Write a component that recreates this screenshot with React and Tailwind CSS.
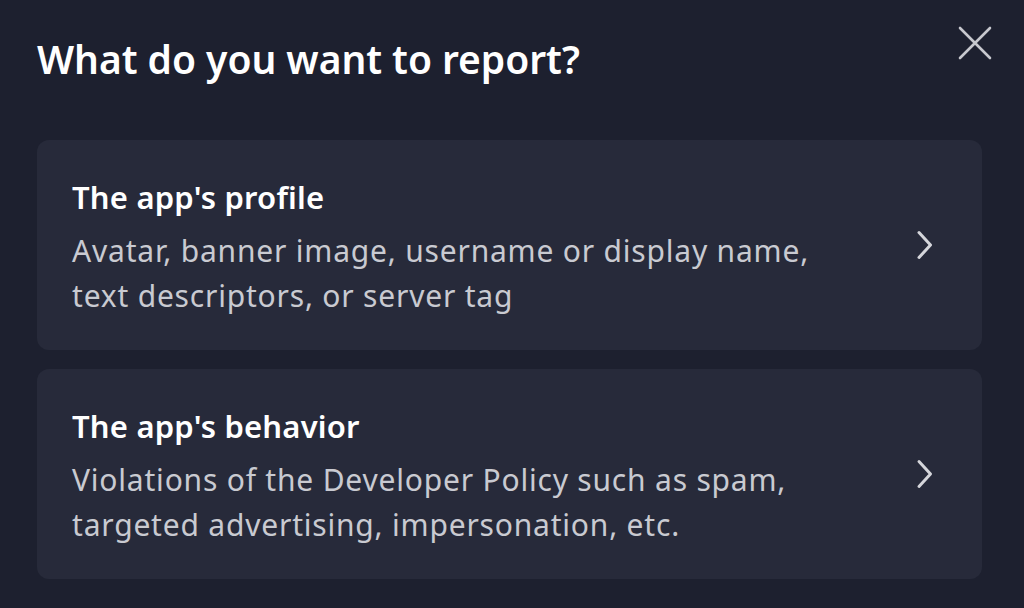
import React from 'react';

const options = [
  {
    id: 'profile',
    title: "The app's profile",
    desc: 'Avatar, banner image, username or display name, text descriptors, or server tag',
  },
  {
    id: 'behavior',
    title: "The app's behavior",
    desc: 'Violations of the Developer Policy such as spam, targeted advertising, impersonation, etc.',
  },
];

const ChevronRight = () => (
  <svg width="20" height="32" viewBox="0 0 20 32" fill="none" stroke="currentColor" strokeWidth="3" strokeLinecap="round" strokeLinejoin="round">
    <path d="M4 3.5l11.5 12.5L4 28.5" />
  </svg>
);

const CloseIcon = () => (
  <svg width="36" height="36" viewBox="0 0 36 36" fill="none" stroke="currentColor" strokeWidth="2.6" strokeLinecap="round">
    <path d="M3 3l30 30M33 3L3 33" />
  </svg>
);

export default function App() {
  return (
    <div className="w-[1024px] h-[608px] bg-[#1d202f] font-['Noto_Sans',sans-serif] overflow-hidden">
      <div className="flex items-start justify-between pl-[37px] pr-[31px] pt-[30px]">
        <h2 className="text-[39px] leading-[58px] font-semibold text-white tracking-[-0.05px]">What do you want to report?</h2>
        <button className="text-[#c7c8ce] -mt-[5px]">
          <CloseIcon />
        </button>
      </div>

      <div className="flex flex-col gap-[19px] pl-[37px] pt-[52px] pr-[42px]">
        {options.map((opt) => (
          <div key={opt.id} className="h-[210px] bg-[#272a3a] rounded-[12px] flex items-center pl-[35px] pr-[47px]">
            <div className="flex-1 mt-[4px]">
              <div className="text-[31px] leading-[40px] font-semibold text-white tracking-[0.2px]">{opt.title}</div>
              <div className="text-[30px] leading-[45px] text-[#c9cad1] max-w-[770px] mt-[11px] tracking-[0.8px]">{opt.desc}</div>
            </div>
            <div className="text-[#d5d6db]">
              <ChevronRight />
            </div>
          </div>
        ))}
      </div>
    </div>
  );
}
